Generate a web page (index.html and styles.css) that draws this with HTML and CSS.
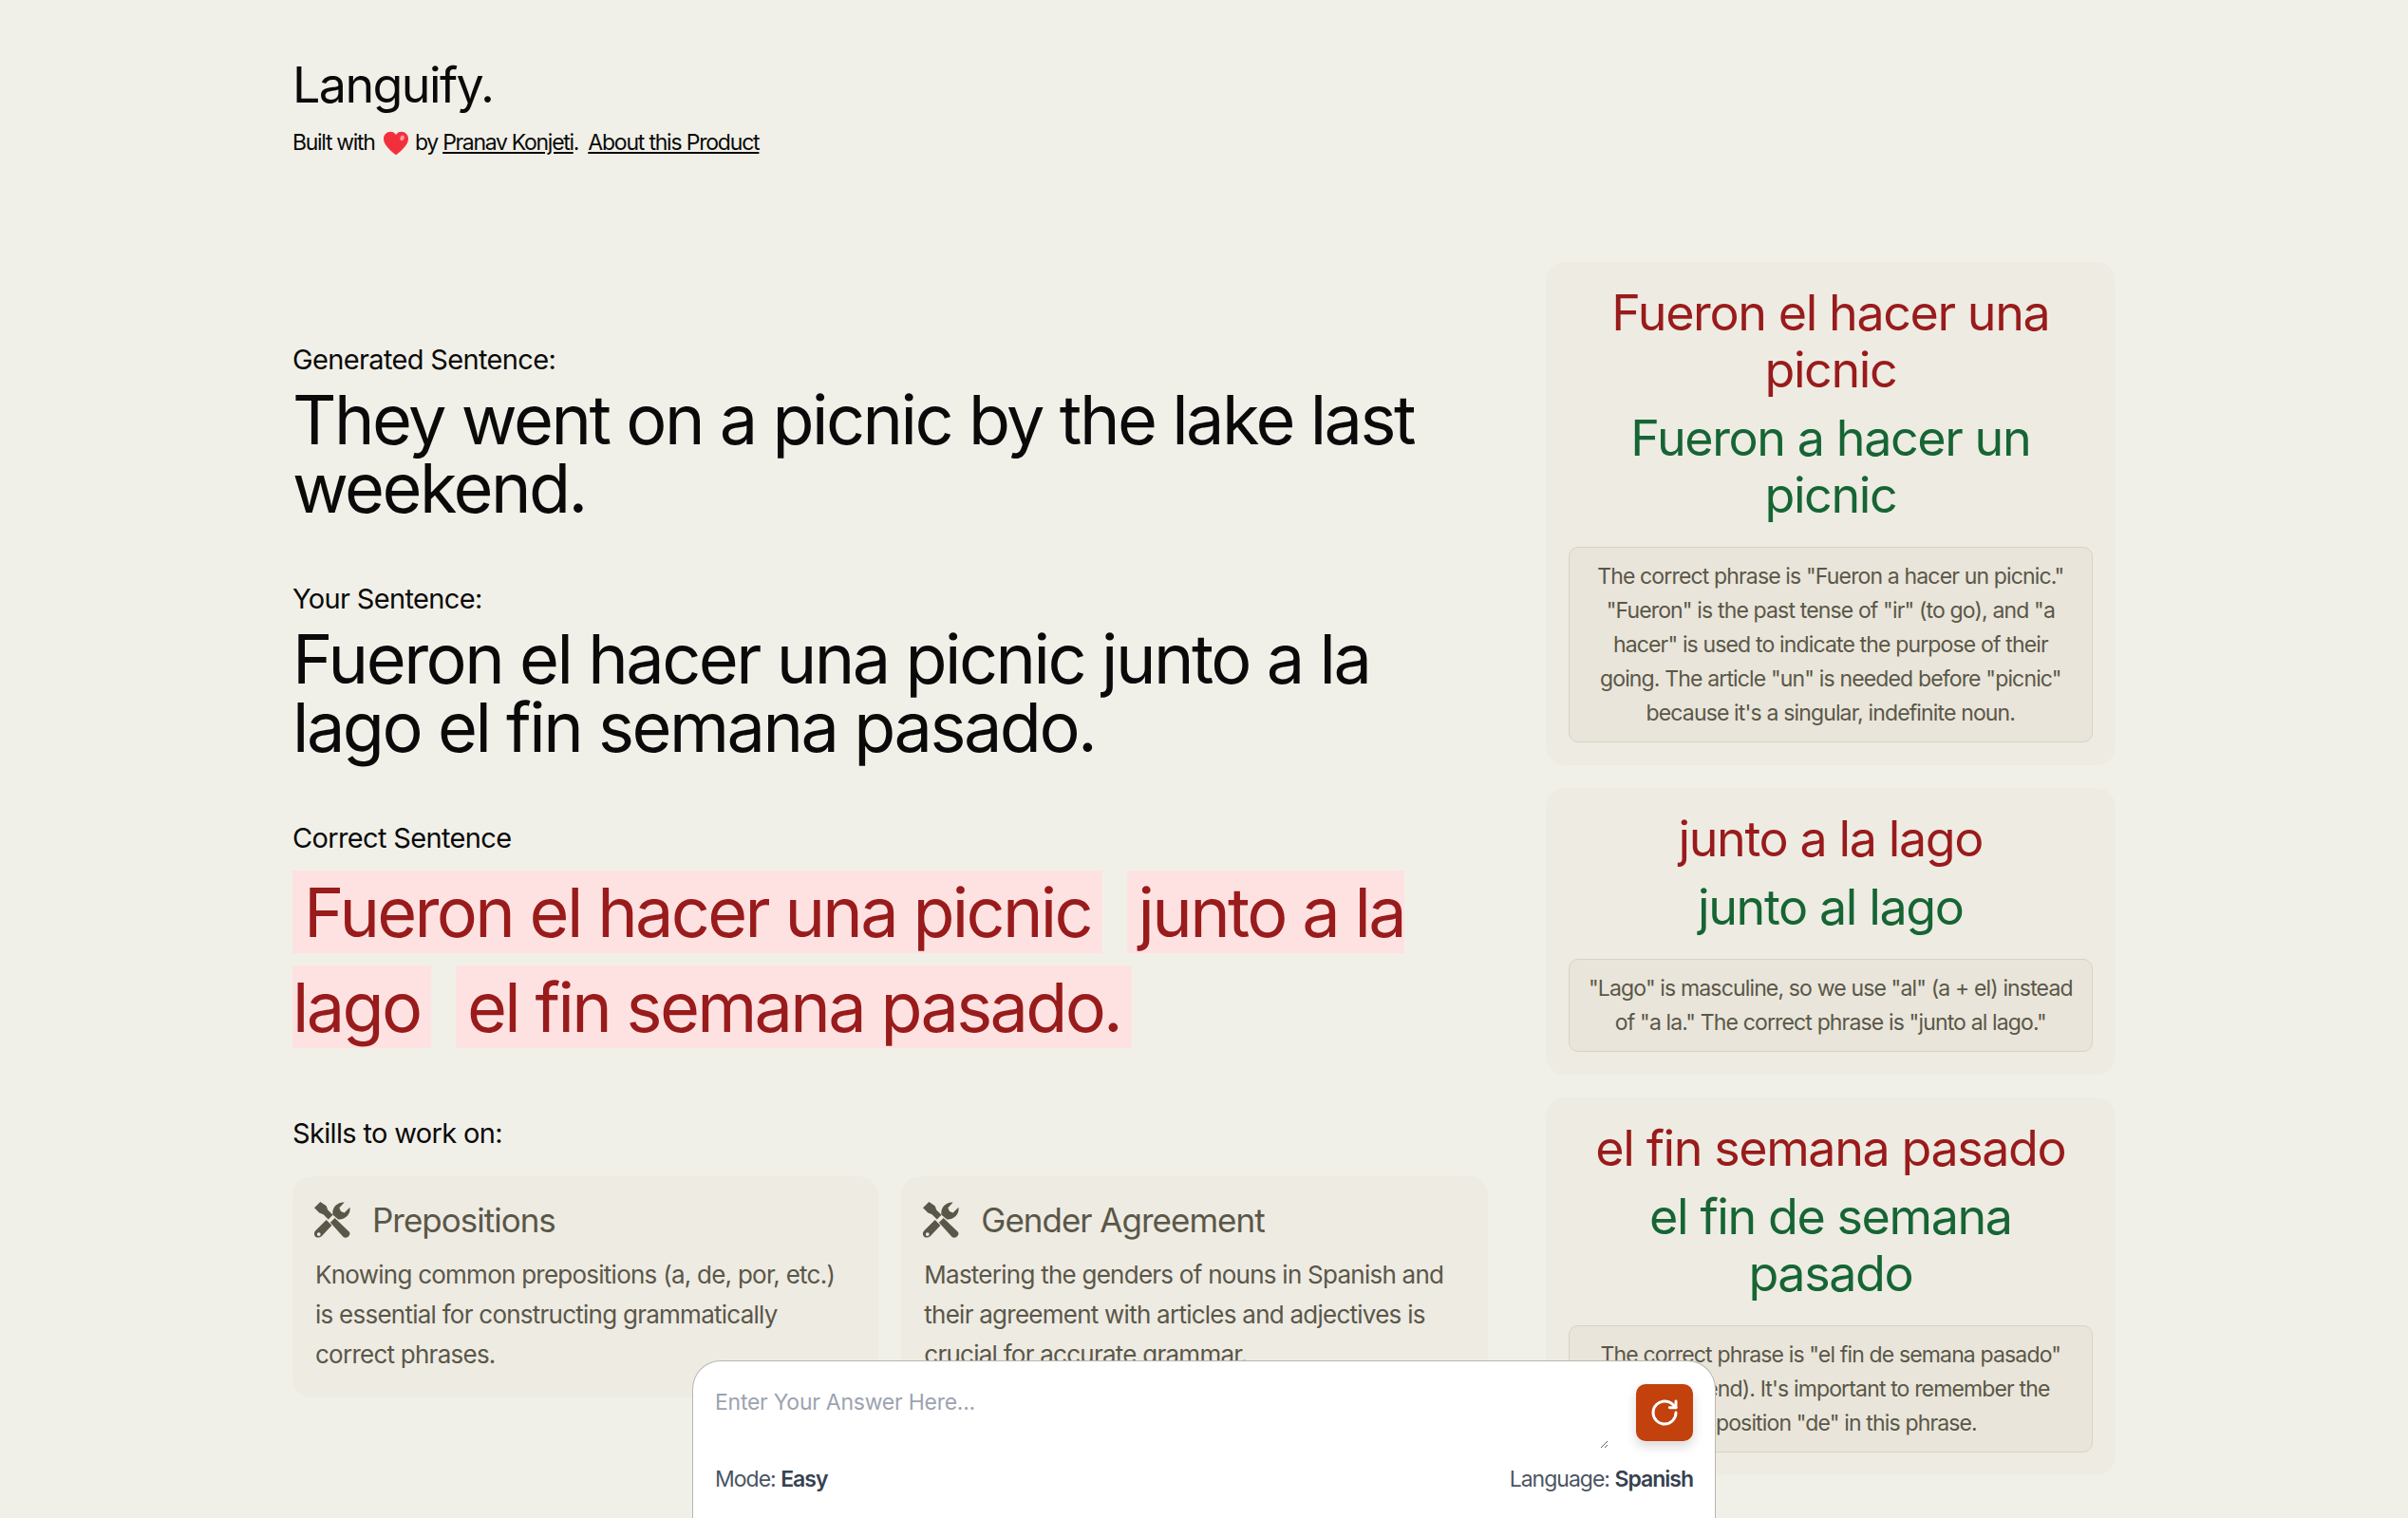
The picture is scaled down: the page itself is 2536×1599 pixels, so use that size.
FILE: index.html
```html
<!DOCTYPE html>
<html lang="en">
<head>
  <meta charset="UTF-8">
  <title>Languify</title>
  <link rel="stylesheet" href="styles.css">
</head>
<body>
  <div class="page">
    <header class="header">
      <h1>Languify.</h1>
      <p class="credit">Built with
        <svg class="heart" viewBox="0 0 32 32"><path fill="#f2303c" d="M16 31C10 26 0 18.500 0 10 0 5 4 1 9 1c3 0 5.500 1.500 7 4 1.500-2.500 4-4 7-4 5 0 9 4 9 9 0 8.500-10 16-16 21z"/><ellipse fill="#ff9a9f" cx="24" cy="9" rx="2.500" ry="3.500" transform="rotate(25 24 9)"/></svg>
        by <a href="#">Pranav Konjeti</a>. <a href="#" class="about">About this Product</a></p>
    </header>

    <div class="columns">
      <main class="main">
        <section class="block">
          <p class="label">Generated Sentence:</p>
          <p class="sentence">They went on a picnic by the lake last weekend.</p>
        </section>
        <section class="block">
          <p class="label">Your Sentence:</p>
          <p class="sentence">Fueron el hacer una picnic junto a la lago el fin semana pasado.</p>
        </section>
        <section class="block block-marked">
          <p class="label">Correct Sentence</p>
          <p class="marked"><mark>Fueron el hacer una picnic</mark> <mark>junto a la lago</mark> <mark>el fin semana pasado.</mark></p>
        </section>
        <section class="block">
          <p class="label">Skills to work on:</p>
          <div class="skills">
            <div class="skill">
              <h3><svg class="tools" viewBox="0 0 36 36"><use href="#tools-icon"/></svg>Prepositions</h3>
              <p>Knowing common prepositions (a, de, por, etc.) is essential for constructing grammatically correct phrases.</p>
            </div>
            <div class="skill">
              <h3><svg class="tools" viewBox="0 0 36 36"><use href="#tools-icon"/></svg>Gender Agreement</h3>
              <p>Mastering the genders of nouns in Spanish and their agreement with articles and adjectives is crucial for accurate grammar.</p>
            </div>
          </div>
        </section>
      </main>

      <aside class="side">
        <div class="fix">
          <p class="wrong">Fueron el hacer una picnic</p>
          <p class="right">Fueron a hacer un picnic</p>
          <p class="why">The correct phrase is "Fueron a hacer un picnic." "Fueron" is the past tense of "ir" (to go), and "a hacer" is used to indicate the purpose of their going. The article "un" is needed before "picnic" because it's a singular, indefinite noun.</p>
        </div>
        <div class="fix">
          <p class="wrong">junto a la lago</p>
          <p class="right">junto al lago</p>
          <p class="why">"Lago" is masculine, so we use "al" (a + el) instead of "a la." The correct phrase is "junto al lago."</p>
        </div>
        <div class="fix">
          <p class="wrong">el fin semana pasado</p>
          <p class="right">el fin de semana pasado</p>
          <p class="why">The correct phrase is "el fin de semana pasado" (the weekend). It's important to remember the preposition "de" in this phrase.</p>
        </div>
      </aside>
    </div>
  </div>

  <form class="answer">
    <div class="answer-top">
      <textarea placeholder="Enter Your Answer Here..."></textarea>
      <button type="button" class="retry">
        <svg viewBox="0 0 24 24" fill="none" stroke="#fff" stroke-width="2.2" stroke-linecap="round" stroke-linejoin="round"><path d="M21 12a9 9 0 1 1-9-9c2.520 0 4.930 1 6.740 2.740L21 8"/><path d="M21 3v5h-5"/></svg>
      </button>
    </div>
    <div class="answer-meta">
      <span>Mode: <b>Easy</b></span>
      <span>Language: <b>Spanish</b></span>
    </div>
  </form>

  <svg class="defs" aria-hidden="true">
    <symbol id="tools-icon" viewBox="0 0 36 36">
      <path fill="currentColor" d="M0 6 6 0l6 4 1.500 4 5 5-4.500 4.500-5-5-4-1.500z"/>
      <path fill="currentColor" d="M16 20.500l4.500-4.500L35 30q1.500 2.500-1.500 5-2.500 1.500-4.500 0z"/>
      <path fill="currentColor" d="M30 .5 25 6l1.500 3.500L30 11l5.500-5.500A10.500 10.500 0 0 1 24 17.500L18.500 13A10.500 10.500 0 0 1 30 .5z"/>
      <path fill="currentColor" fill-rule="evenodd" d="M12 18l5.500 5.500L7.500 34Q4 37 1 34.500q-2.500-3 .5-6zM4.500 30.500a1.800 1.800 0 1 0 0 3.600 1.800 1.800 0 0 0 0-3.600z"/>
    </symbol>
  </svg>
</body>
</html>
```

FILE: styles.css
```css
* {
  box-sizing: border-box;
}
html, body {
  margin: 0;
  padding: 0;
}
body {
  background: #f1f0e8;
  color: #0a0a0a;
  font-family: Inter, "Open Sans", sans-serif;
}
p, h1, h3 {
  margin: 0;
  font-weight: 400;
}
.page {
  width: 1920px;
  margin-left: 308px;
  padding-top: 57px;
}
.header h1 {
  font-size: 52px;
  line-height: 66px;
  letter-spacing: -1.6px;
}
.credit {
  margin-top: 9px;
  font-size: 23px;
  line-height: 36px;
  letter-spacing: -1.3px;
}
.credit a {
  color: inherit;
}
.about {
  margin-left: 5px;
  letter-spacing: -1.2px;
}
.heart {
  width: 26px;
  height: 26px;
  vertical-align: -6px;
  margin: 0 2px 0 4px;
}
.columns {
  display: flex;
  gap: 61px;
  margin-top: 108px;
}
.main {
  width: 1260px;
  padding-top: 79px;
}
.block {
  margin-bottom: 57px;
}
.block-marked {
  margin-bottom: 59px;
}
.label {
  font-size: 29px;
  line-height: 48px;
  letter-spacing: -0.65px;
}
.sentence {
  margin-top: 3px;
  font-size: 72px;
  line-height: 72px;
  letter-spacing: -2.5px;
}
.marked {
  margin-top: 4px;
  font-size: 72px;
  line-height: 100px;
  color: #991b1b;
  letter-spacing: -2.7px;
}
.marked mark {
  background: #fee2e2;
  color: inherit;
  padding: 0 12px;
  margin-right: 8px;
}
.skills {
  display: grid;
  grid-template-columns: 1fr 1fr;
  gap: 24px;
  margin-top: 21px;
}
.skill {
  background: #eeebe3;
  border-radius: 20px;
  padding: 22px 24px 24px;
  color: #5a5748;
}
.skill h3 {
  display: flex;
  align-items: center;
  gap: 23px;
  font-size: 35px;
  line-height: 48px;
  letter-spacing: -1px;
}
.tools {
  width: 38px;
  height: 38px;
  flex: none;
  margin-left: -1px;
}
.skill p {
  margin-top: 13px;
  font-size: 26px;
  line-height: 42px;
  letter-spacing: -0.75px;
}
.side {
  width: 601px;
  display: flex;
  flex-direction: column;
  gap: 24px;
}
.fix {
  background: #eeebe3;
  border-radius: 20px;
  padding: 24px;
  text-align: center;
}
.wrong, .right {
  font-size: 52px;
  line-height: 60px;
  letter-spacing: -1.4px;
}
.wrong {
  color: #991b1b;
}
.right {
  margin-top: 12px;
  color: #166534;
}
.why {
  margin-top: 24px;
  background: #e9e5da;
  border: 1px solid #d6d3c4;
  border-radius: 10px;
  padding: 12px 17px;
  font-size: 23px;
  line-height: 36px;
  letter-spacing: -0.85px;
  color: #5a5748;
}
.answer {
  position: fixed;
  left: 729px;
  bottom: 0;
  width: 1078px;
  height: 166px;
  background: #fff;
  border: 1px solid #b9b7ae;
  border-bottom: 0;
  border-radius: 30px 30px 0 0;
  padding: 24px 23px;
}
.answer-top {
  display: flex;
  gap: 29px;
  margin-bottom: 16px;
}
.answer textarea {
  flex: 1;
  height: 68px;
  border: 0;
  outline: 0;
  padding: 3px 0 0;
  font-family: inherit;
  font-size: 23px;
  line-height: 32px;
  letter-spacing: -0.25px;
}
.answer textarea::placeholder {
  color: #9ca3af;
}
.retry {
  width: 60px;
  height: 60px;
  flex: none;
  border: 0;
  padding: 14px;
  border-radius: 10px;
  background: #c2410c;
  box-shadow: 0 6px 12px rgba(0, 0, 0, 0.15);
}
.answer-meta {
  display: flex;
  justify-content: space-between;
  font-size: 23px;
  line-height: 32px;
  letter-spacing: -1px;
  color: #4b5563;
}
.answer-meta b {
  font-weight: 600;
  color: #374151;
}
.defs {
  display: none;
}
```
